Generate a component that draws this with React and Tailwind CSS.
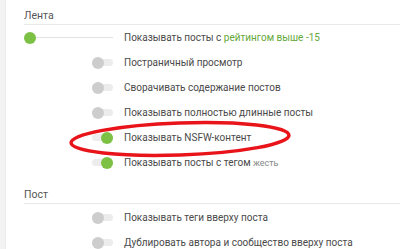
const feed = [
  { label: 'Постраничный просмотр', on: false },
  { label: 'Сворачивать содержание постов', on: false },
  { label: 'Показывать полностью длинные посты', on: false },
  { label: 'Показывать NSFW-контент', on: true },
  { label: 'Показывать посты с тегом', on: true, tag: 'жесть' },
]

const post = [
  { label: 'Показывать теги вверху поста', on: false },
  { label: 'Дублировать автора и сообщество вверху поста', on: false },
]

function Toggle({ on }) {
  return (
    <div className="relative w-[21px] h-[12px]">
      <div className="absolute left-0 top-[2.5px] w-[21px] h-[7px] rounded-full bg-[#ececec]" />
      <div
        className={
          on
            ? 'absolute left-[9px] top-0 w-[12px] h-[12px] rounded-full bg-[#7cc144]'
            : 'absolute left-0 top-0 w-[12px] h-[12px] rounded-full bg-[#cdcdcd]'
        }
      />
    </div>
  )
}

function Row({ control, children }) {
  return (
    <div className="flex items-center h-[25px]">
      <div className="w-[100px] flex justify-end pr-[11px]">{control}</div>
      <div className="text-[10px] leading-[12px] text-[#4a4a4a] whitespace-nowrap">{children}</div>
    </div>
  )
}

function Header({ children, top }) {
  return (
    <div className={`${top} pb-[2px] border-b border-[#e8e8e8] text-[10.5px] leading-[12px] text-[#555]`}>
      {children}
    </div>
  )
}

export default function App() {
  return (
    <div className="relative flex w-[400px] h-[249px] overflow-hidden bg-white" style={{ fontFamily: 'Roboto, "Noto Sans", sans-serif' }}>
      <div className="w-[6px] shrink-0 bg-[#f3f3f3] border-r border-[#ebebeb]" />
      <div className="flex-1 pl-[18px]">
        <Header top="pt-[10px]">Лента</Header>
        <Row
          control={
            <div className="flex items-center w-[89px]">
              <div className="w-[12px] h-[12px] rounded-full bg-[#7cc144] shrink-0" />
              <div className="flex-1 h-[1px] bg-[#e2e2e2]" />
            </div>
          }
        >
          Показывать посты с <span className="text-[#65a83a]">рейтингом выше -15</span>
        </Row>
        {feed.map(r => (
          <Row key={r.label} control={<Toggle on={r.on} />}>
            {r.label}
            {r.tag && <span className="text-[9px] text-[#888]"> {r.tag}</span>}
          </Row>
        ))}
        <Header top="pt-[14px]">Пост</Header>
        <div className="pt-[1px]">
          {post.map(r => (
            <Row key={r.label} control={<Toggle on={r.on} />}>
              {r.label}
            </Row>
          ))}
        </div>
      </div>
      <svg className="absolute left-[64px] top-[114px]" width="232" height="50" viewBox="0 0 232 50">
        <ellipse cx="116" cy="25" rx="109" ry="16" fill="none" stroke="#e8141a" strokeWidth="3.5" transform="rotate(-2 116 25)" />
      </svg>
    </div>
  )
}
